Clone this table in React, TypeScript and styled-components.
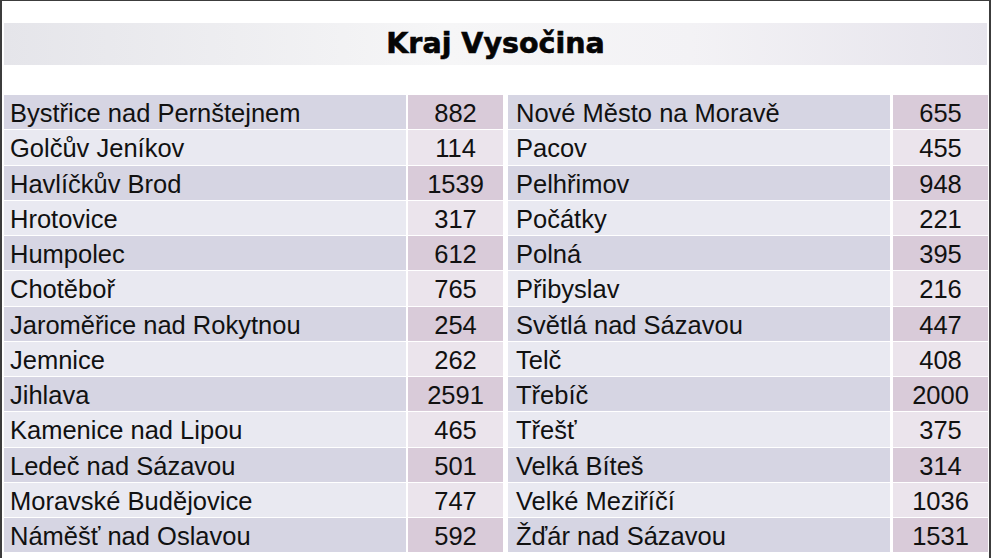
import styled, { createGlobalStyle } from 'styled-components';

const Sans = `"Liberation Sans", Arial, Helvetica, sans-serif`;

const GlobalStyle = createGlobalStyle`
  html, body {
    margin: 0;
    padding: 0;
    background: #ffffff;
  }
  body {
    font-family: ${Sans};
    color: #111111;
  }
`;

const Frame = styled.div`
  width: 991px;
  height: 558px;
  box-sizing: border-box;
  border-top: 1px solid #3c3c3c;
  border-left: 2px solid #3c3c3c;
  border-right: 2px solid #3c3c3c;
  padding: 22px 2px 0;
  overflow: hidden;
  background: #ffffff;
`;

const TitleBand = styled.div`
  height: 42px;
  display: flex;
  align-items: center;
  justify-content: center;
  background: linear-gradient(to right, #e5e5ea 0%, #f6f6f7 45%, #f3f2f5 70%, #e6e4ec 100%);
`;

const Title = styled.h1`
  margin: 0;
  font-family: "DejaVu Sans", ${Sans};
  font-size: 28.5px;
  font-weight: 700;
  line-height: 1;
  color: #050505;
  -webkit-text-stroke: 0.6px #050505;
`;

const Table = styled.div`
  margin-top: 30px;
  display: grid;
  grid-template-columns: 402px 97px 387px 98px;
  grid-auto-rows: 34.25px;
  row-gap: 1px;
`;

const Row = styled.div`
  display: contents;
`;

const Cell = styled.div<{ $odd: boolean; $num?: boolean; $gap?: number; $pad?: number }>`
  background: ${({ $odd, $num }) =>
    $num ? ($odd ? '#d9cbd9' : '#ebe4ec') : $odd ? '#d6d5e3' : '#e9e9f1'};
  font-size: 25.5px;
  line-height: 34px;
  padding-top: 1px;
  padding-left: ${({ $pad = 0 }) => $pad}px;
  margin-left: ${({ $gap = 0 }) => $gap}px;
  text-align: ${({ $num }) => ($num ? 'center' : 'left')};
  white-space: nowrap;
  box-sizing: border-box;
`;

const Rows: [string, number, string, number][] = [
  ['Bystřice nad Pernštejnem', 882, 'Nové Město na Moravě', 655],
  ['Golčův Jeníkov', 114, 'Pacov', 455],
  ['Havlíčkův Brod', 1539, 'Pelhřimov', 948],
  ['Hrotovice', 317, 'Počátky', 221],
  ['Humpolec', 612, 'Polná', 395],
  ['Chotěboř', 765, 'Přibyslav', 216],
  ['Jaroměřice nad Rokytnou', 254, 'Světlá nad Sázavou', 447],
  ['Jemnice', 262, 'Telč', 408],
  ['Jihlava', 2591, 'Třebíč', 2000],
  ['Kamenice nad Lipou', 465, 'Třešť', 375],
  ['Ledeč nad Sázavou', 501, 'Velká Bíteš', 314],
  ['Moravské Budějovice', 747, 'Velké Meziříčí', 1036],
  ['Náměšť nad Oslavou', 592, 'Žďár nad Sázavou', 1531],
];

export default function App() {
  return (
    <>
      <GlobalStyle />
      <Frame>
        <TitleBand>
          <Title>Kraj Vysočina</Title>
        </TitleBand>
        <Table>
          {Rows.map(([a, an, b, bn], i) => {
            const odd = i % 2 === 0;
            return (
              <Row key={a}>
                <Cell $odd={odd} $pad={6}>
                  {a}
                </Cell>
                <Cell $odd={odd} $num $gap={2}>
                  {an}
                </Cell>
                <Cell $odd={odd} $gap={5} $pad={8}>
                  {b}
                </Cell>
                <Cell $odd={odd} $num $gap={3}>
                  {bn}
                </Cell>
              </Row>
            );
          })}
        </Table>
      </Frame>
    </>
  );
}
